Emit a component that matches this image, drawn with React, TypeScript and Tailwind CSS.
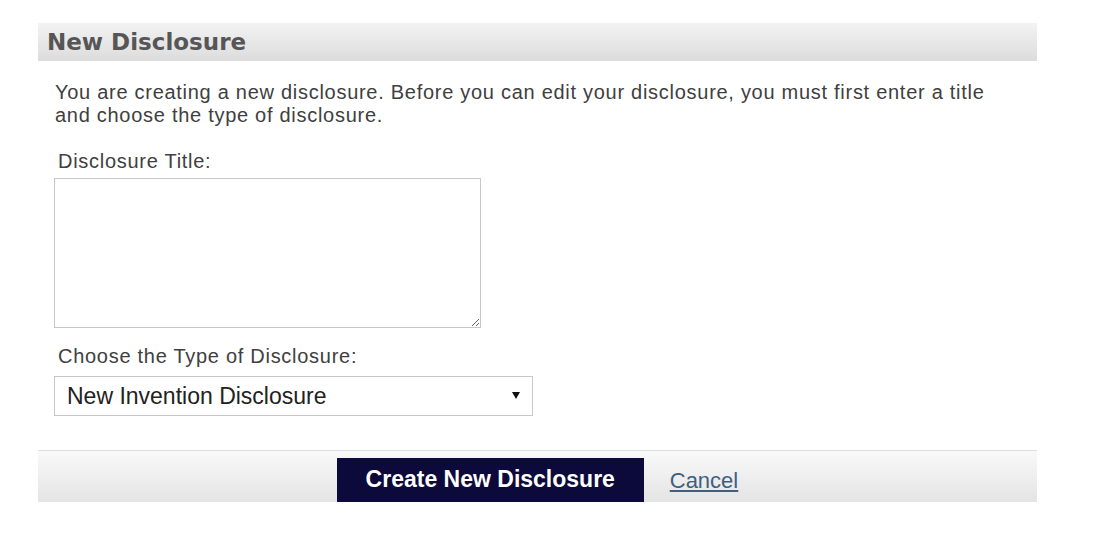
import React from "react";

export default function App() {
  return (
    <div className="w-[1100px] h-[550px] bg-white pt-[23px] pl-[38px]" style={{ fontFamily: '"Liberation Sans", Arial, sans-serif' }}>
      <div className="w-[999px]">
        <div className="h-[38px] flex items-center pl-[9px] bg-gradient-to-b from-[#f3f3f3] to-[#dcdcdc]">
          <h1 className="text-[23px] font-bold text-[#565656] leading-none" style={{ fontFamily: '"DejaVu Sans", Verdana, sans-serif' }}>
            New Disclosure
          </h1>
        </div>
        <div className="pt-[20px] pl-[17px] pr-[10px]">
          <p className="text-[20px] tracking-[0.72px] leading-[23px] text-[#404040]">
            You are creating a new disclosure. Before you can edit your disclosure, you must first enter a title
            <br />
            and choose the type of disclosure.
          </p>
          <div className="mt-[23px] pl-[3px] text-[20px] tracking-[0.72px] leading-[23px] text-[#404040]">Disclosure Title:</div>
          <textarea
            className="mt-[5px] -ml-[1px] block w-[427px] h-[150px] border border-[#c8c8c8] bg-white outline-none"
            aria-label="Disclosure Title"
          />
          <div className="mt-[17px] pl-[3px] text-[20px] tracking-[0.72px] leading-[23px] text-[#404040]">Choose the Type of Disclosure:</div>
          <div className="relative mt-[8px] -ml-[1px] w-[479px] h-[40px]">
            <select
              className="appearance-none w-full h-full border border-[#c8c8c8] bg-white pl-[12px] text-[23px] text-[#222] outline-none"
              defaultValue="new"
              style={{ fontFamily: '"Liberation Sans", Arial, sans-serif' }}
            >
              <option value="new">New Invention Disclosure</option>
            </select>
            <svg className="absolute right-[13px] top-[16px] pointer-events-none" width="8" height="7" viewBox="0 0 8 7">
              <path d="M0 0 L8 0 L4 7 Z" fill="#111" />
            </svg>
          </div>
        </div>
        <div className="mt-[34px] h-[52px] overflow-hidden border-t border-[#dedede] bg-gradient-to-b from-[#f9f9f9] to-[#e4e4e4] flex justify-center gap-[26px] pt-[7px]">
          <button className="h-[48px] w-[307px] bg-[#0c0a3a] text-white text-[23px] font-bold flex items-start justify-center pt-[10px] leading-none">
            Create New Disclosure
          </button>
          <a href="#" className="text-[22px] leading-none text-[#3f5f80] underline pt-[12px]">
            Cancel
          </a>
        </div>
      </div>
    </div>
  );
}
